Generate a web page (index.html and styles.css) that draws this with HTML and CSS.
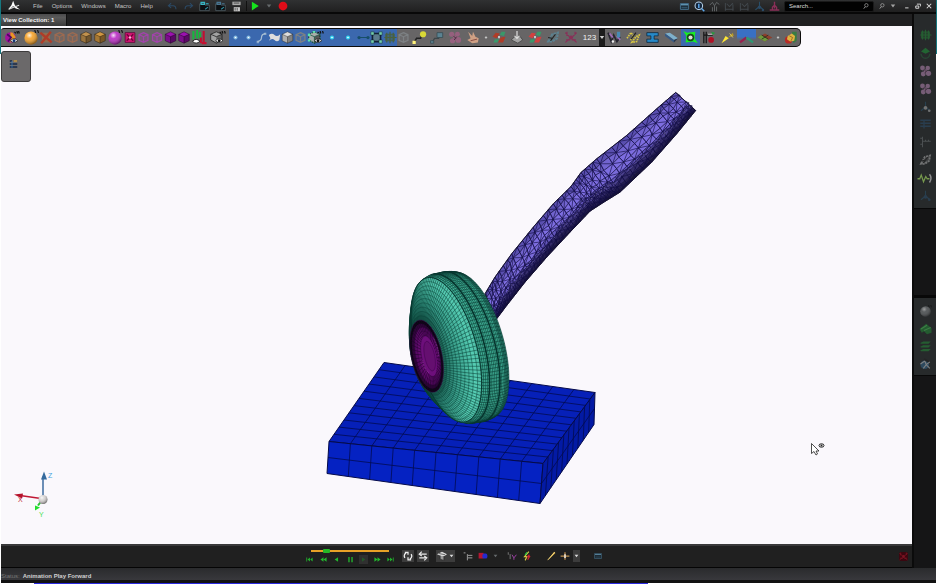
FILE: index.html
```html
<!DOCTYPE html>
<html lang="en">
<head>
<meta charset="utf-8">
<title>View Collection</title>
<link rel="stylesheet" href="styles.css">
</head>
<body>
<svg class="defs" aria-hidden="true">
  <defs>
    <radialGradient id="shine" cx=".38" cy=".3" r=".75"><stop offset="0" stop-color="#fff" stop-opacity=".85"/><stop offset=".35" stop-color="#fff" stop-opacity=".15"/><stop offset="1" stop-color="#000" stop-opacity=".55"/></radialGradient>
  </defs>
  <symbol id="cube" viewBox="0 0 16 16"><path d="M8 1l6.500 3v8L8 15l-6.500-3V4z" fill="currentColor"/><path d="M1.500 4L8 7v8l-6.500-3z" fill="#000" opacity=".2"/><path d="M14.500 4L8 7v8l6.500-3z" fill="#000" opacity=".42"/><path d="M8 1l6.500 3v8L8 15l-6.500-3V4zM1.500 4L8 7l6.500-3M8 7v8" fill="none" stroke="#000" stroke-opacity=".45"/></symbol>
  <symbol id="wire" viewBox="0 0 16 16"><path d="M8 2l5.500 2.500v7L8 14l-5.500-2.500v-7zM2.500 4.500L8 7l5.500-2.500M8 7v7" fill="currentColor" fill-opacity=".25" stroke="currentColor" stroke-width="1.500"/></symbol>
  <symbol id="eyecube" viewBox="0 0 20 16"><path d="M8 1l7 3v7l-7 4-7-4V4z" fill="currentColor" stroke="#222"/><path d="M15 4L8 7v8l7-4z" fill="#000" opacity=".4"/><path d="M1 4l7 3 7-3" fill="none" stroke="#222"/><path d="M12 1l2 2M15 0l1 3M18 0l1 3" stroke="#111" stroke-width="1.500"/><path d="M7 12q4.500-5 9 0q-4.500 4-9 0" fill="#fff" stroke="#222"/><circle cx="11.500" cy="12" r="1.800" fill="#111"/></symbol>
  <symbol id="meshcube" viewBox="0 0 20 16"><path d="M8 1l7 3v7l-7 4-7-4V4z" fill="#a9adaa" stroke="#14533f" stroke-width="1.500" stroke-dasharray="2 1"/><path d="M15 4L8 7v8l7-4z" fill="#000" opacity=".5"/><path d="M1 4l7 3 7-3M8 7v7" fill="none" stroke="#1f5a48"/><path d="M0 3h3v3H0zM6 0h3v2H6zM0 10h3v3H0z" fill="#59e5b0"/><path d="M12 1l2 2M15 0l1 3M18 0l1 3" stroke="#111" stroke-width="1.500"/><path d="M8 12q4.500-5 9 0q-4.500 4-9 0" fill="#fff" stroke="#222"/><circle cx="12.500" cy="12" r="1.800" fill="#111"/></symbol>
  <symbol id="duo" viewBox="0 0 20 16"><circle cx="8" cy="8" r="6.500" fill="#a3119f"/><path d="M8 1.500v13l5-3 1.500-4L11 2z" fill="#e99722"/><path d="M4 4l5 4-4 5" stroke="#4c0764" stroke-width="2" fill="none"/><path d="M13 1l2 2M16 0l1 3M18 0l1 3" stroke="#111" stroke-width="1.500"/><path d="M8 12q4.500-5 9 0q-4.500 4-9 0" fill="#fff" stroke="#222"/><circle cx="12.500" cy="12" r="1.800" fill="#137"/></symbol>
  <symbol id="ball" viewBox="0 0 16 16"><circle cx="8" cy="8.500" r="7" fill="currentColor"/><circle cx="8" cy="8.500" r="7" fill="url(#shine)"/><path d="M12 0l1 3M15 0l1 3" stroke="#111" stroke-width="1.200"/></symbol>
  <symbol id="cross" viewBox="0 0 16 16"><path d="M3 2h10v12H3z" fill="#8f6d4e"/><path d="M1 2l14 12M14 1L2 15" stroke="currentColor" stroke-width="3"/></symbol>
  <symbol id="dot" viewBox="0 0 16 16"><circle cx="8" cy="8" r="2.500" fill="currentColor"/><circle cx="8" cy="8" r="1" fill="#fff"/></symbol>
  <symbol id="line" viewBox="0 0 16 16"><path d="M3 13q5-1 5-5t5-5" fill="none" stroke="currentColor" stroke-width="1.500"/><path d="M2 12h3v3H2zM11 2h3v3h-3z" fill="currentColor" opacity=".7"/></symbol>
  <symbol id="flag" viewBox="0 0 16 16"><path d="M1 5q4-3 7 0t7-1l-1 7q-3 3-6 0t-7 1l2-3z" fill="currentColor"/></symbol>
  <symbol id="link" viewBox="0 0 16 16"><path d="M2 8h12" stroke="currentColor" stroke-width="1.500"/><circle cx="2.500" cy="8" r="2" fill="currentColor"/><circle cx="13.500" cy="8" r="2" fill="currentColor"/></symbol>
  <symbol id="select" viewBox="0 0 16 16"><path d="M3 3h10v10H3z" fill="#5b7c8c" stroke="#123" stroke-width="2"/><path d="M1 1h4v4H1zM11 1h4v4h-4zM1 11h4v4H1zM11 11h4v4h-4z" fill="currentColor" stroke="#123" stroke-width=".6"/></symbol>
  <symbol id="redbox" viewBox="0 0 16 16"><path d="M2 2h12v12H2z" fill="#d31272" stroke="#5e0a3a"/><path d="M4 4l8 8M12 4l-8 8" stroke="#74063c" stroke-width="2"/><circle cx="8" cy="8" r="1.500" fill="#ffb3d6"/></symbol>
  <symbol id="pin" viewBox="0 0 18 16"><path d="M3 14l3-5h5l2-6" fill="none" stroke="#222" stroke-width="1.800"/><path d="M1 12h4v4H1z" fill="#fff27a"/><circle cx="14" cy="4" r="3.800" fill="currentColor"/></symbol>
  <symbol id="tag" viewBox="0 0 18 16"><path d="M3 14l3-5h5l2-4" fill="none" stroke="#3c4649" stroke-width="1.500"/><path d="M1 12h4v3H1zM9 2h7v6H9z" fill="currentColor" stroke="#384c54"/></symbol>
  <symbol id="blob" viewBox="0 0 16 16"><circle cx="4" cy="4" r="3.200" fill="currentColor"/><circle cx="11" cy="4" r="3" fill="currentColor"/><circle cx="12" cy="11" r="3.500" fill="currentColor"/><circle cx="5" cy="12" r="3.200" fill="currentColor"/><circle cx="8" cy="8" r="2.500" fill="currentColor"/><path d="M6 6l3 3M10 7l-3 4" stroke="#3b2436"/></symbol>
  <symbol id="hand" viewBox="0 0 16 16"><path d="M2 1l5 5 1-5 3 6 4 2-1 5-7 1-6-4 4-2z" fill="currentColor"/><path d="M5 12l8-2" stroke="#7a3a35"/></symbol>
  <symbol id="chips" viewBox="0 0 16 16"><path d="M0 7l4-5 5 1-4 6zM7 14l3-6 6-1-3 7z" fill="currentColor"/><path d="M9 5l2-4h5l-2 5zM1 14l2-4h5l-2 4z" fill="#39996a"/><path d="M7 6h2v3H7" fill="#ddd"/></symbol>
  <symbol id="stamp" viewBox="0 0 16 16"><path d="M1 11l4-4h7l3 4-6 4z" fill="currentColor" stroke="#444"/><path d="M8 0v8M5 6l3 3 3-3" stroke="#ddd" stroke-width="1.500" fill="none"/></symbol>
  <symbol id="gears" viewBox="0 0 16 16"><path d="M2 13l5-9 7-2-1 7-6 4z" fill="currentColor" fill-opacity=".3" stroke="currentColor" stroke-width="2.500" stroke-dasharray="3 1"/><path d="M5 12l6-8M2 8l5 1" stroke="#222" stroke-width="1.500"/></symbol>
  <symbol id="burst" viewBox="0 0 16 16"><path d="M1 2l5 5M15 2l-5 5M1 14l5-4M15 14l-5-4M3 1v5M13 1v4M2 11h5M9 11h5" stroke="currentColor" stroke-width="1.500" fill="none"/><circle cx="8" cy="8" r="2.500" fill="currentColor"/></symbol>
  <symbol id="bars" viewBox="0 0 16 16"><path d="M2 1v9M6 0v9M9 2v7" stroke="#17b53e" stroke-width="2.200"/><path d="M13 1v13M10 8v6M11 14h5" stroke="#c40f30" stroke-width="2.200"/><path d="M1 12q4-4 8 0q-4 4-8 0" fill="#fff" stroke="#222"/></symbol>
  <symbol id="paint" viewBox="0 0 18 16"><path d="M1 2l4 11 3-8 4 8 4-6" stroke="#25252f" stroke-width="2" fill="none"/><path d="M3 3l4 5M12 6l4 5" stroke="#a06bbb" stroke-width="2"/><path d="M12 1h4v7h-4z" fill="#478bb4"/><circle cx="7" cy="13" r="1.500" fill="#eee"/></symbol>
  <symbol id="steps" viewBox="0 0 18 16"><path d="M1 9l5-7 3 4-4 6M7 14l5-7 4-2-3 8z" stroke="currentColor" stroke-width="2" stroke-dasharray="2 1" fill="none"/><path d="M6 10l6-8" stroke="#222" stroke-width="1.500"/></symbol>
  <symbol id="beam" viewBox="0 0 18 16"><path d="M2 2h14v4h-5v4h5v4H2v-4h5V6H2z" fill="#2689c8" stroke="#102b40"/></symbol>
  <symbol id="layer" viewBox="0 0 18 16"><path d="M1 3l6-1 10 7-5 2z" fill="#7eb0cc"/><path d="M1 3l11 8v3L1 6z" fill="#355a86"/><path d="M17 9l-5 5v-3z" fill="#28384d"/></symbol>
  <symbol id="target" viewBox="0 0 18 16"><path d="M0 0l5 2 10-1-1 8 4 6-6-2-9 1 1-8z" fill="#18ed22"/><circle cx="9" cy="8" r="4.500" fill="#154d19"/><circle cx="9" cy="8" r="2.500" fill="#ddd"/></symbol>
  <symbol id="gauge" viewBox="0 0 18 16"><path d="M2 1v14M5 1v14M2 5h11" stroke="#161616" stroke-width="1.500"/><path d="M7 4h6" stroke="#eee"/><circle cx="11" cy="11" r="3.500" fill="#b01025"/><path d="M11 1l5 1-3 3z" fill="#269b3e"/></symbol>
  <symbol id="wand" viewBox="0 0 18 16"><path d="M1 15l5-9 4 3z" fill="#ffe735"/><path d="M9 8l6-6 1 4z" fill="#b79a28"/><path d="M11 3l4 5" stroke="#ddd277"/></symbol>
  <symbol id="axes" viewBox="0 0 18 16"><path d="M9 8L1 14" stroke="#99204e" stroke-width="2.800"/><path d="M9 8l8 6" stroke="#2c9a72" stroke-width="2.800"/></symbol>
  <symbol id="plate" viewBox="0 0 18 16"><path d="M0 8l9-5 9 5-9 5z" fill="#8e3f2c"/><path d="M0 8l4-3 9 5-4 3z" fill="#6c9a3d"/><path d="M5 5l8 5M13 5L5 10" stroke="#2b3020"/></symbol>
  <symbol id="fruit" viewBox="0 0 18 16"><path d="M10 1h6v11l-4 3z" fill="#387c42"/><circle cx="6" cy="11" r="4.500" fill="#b72b25"/><path d="M5 6l5-3 4 3-1 6-5 1-4-3z" fill="#dfb340"/><path d="M7 6l4 2-2 4" stroke="#8a5e21" fill="none"/></symbol>
  <symbol id="table" viewBox="0 0 16 16"><path d="M1 3h14M1 7h14M1 11h14M6 2v12" stroke="currentColor" stroke-width="1.800"/></symbol>
  <symbol id="win" viewBox="0 0 16 12"><path d="M1 1h14v10H1z" fill="#1d2f3c" stroke="currentColor" stroke-width="1.500"/><path d="M2 3h12" stroke="#6aa5c6" stroke-width="2"/><path d="M3 8h10" stroke="currentColor"/></symbol>
  <symbol id="tree" viewBox="0 0 16 16"><path d="M3 4h3M8 4h5M3 8h10M3 12h10" stroke="#182a48" stroke-width="2"/><path d="M8 4h5" stroke="#d8a646" stroke-width="2"/><path d="M6 4v9" stroke="#377dc0"/></symbol>
  <symbol id="folder" viewBox="0 0 16 16"><path d="M1 14V4h6l2 2h6v8z" fill="#0c0f12" stroke="#5b6970"/><path d="M3 2h5v3H3zM10 4h4" stroke="currentColor" stroke-width="1.800" fill="none"/><path d="M9 12l4-3" stroke="#3196a8" stroke-width="1.500"/></symbol>
  <symbol id="disk" viewBox="0 0 16 16"><path d="M2 1h12v5H2z" fill="#aaa"/><path d="M4 9h9v6H4z" fill="#ccc"/><path d="M6 10v4M9 10v4M4 3h8" stroke="#222"/></symbol>
  <symbol id="undo" viewBox="0 0 16 16"><path d="M6 3L2 7l4 3M2 7h7q4 0 4 5" fill="none" stroke="currentColor" stroke-width="1.500"/></symbol>
  <symbol id="play" viewBox="0 0 16 16"><path d="M3 1l11 7-11 7z" fill="currentColor"/></symbol>
  <symbol id="record" viewBox="0 0 16 16"><circle cx="8" cy="8" r="7" fill="currentColor"/></symbol>
  <symbol id="caret" viewBox="0 0 8 8"><path d="M1 2h6L4 6z" fill="currentColor"/></symbol>
  <symbol id="zoomer" viewBox="0 0 16 16"><circle cx="7" cy="7" r="5.500" fill="#12243a" stroke="#b9d4ec" stroke-width="1.500"/><path d="M7 4v6M11 11l4 4" stroke="#5ca6e8" stroke-width="2.200"/></symbol>
  <symbol id="chart" viewBox="0 0 16 16"><path d="M1 6l4-4 3 5 3-5 4 3M5 9v6M8 7v8M11 8v7" fill="none" stroke="currentColor" stroke-width="1.300"/></symbol>
  <symbol id="frame" viewBox="0 0 16 16"><path d="M2 14V3M2 12h12M4 4l4 4 5-5M13 5v9" fill="none" stroke="currentColor" stroke-width="1.500"/></symbol>
  <symbol id="ruler" viewBox="0 0 16 16"><path d="M4 1v14M4 7h11M1 3h3M1 11h3M8 5v2M12 5v2" fill="none" stroke="currentColor" stroke-width="1.300"/></symbol>
  <symbol id="nodes" viewBox="0 0 16 16"><path d="M8 1v7l-6 5M8 8l6 5" stroke="#2a4f68" fill="none" stroke-width="1.500"/><circle cx="8" cy="9" r="2.500" fill="currentColor"/><circle cx="13" cy="13" r="1.800" fill="currentColor"/></symbol>
  <symbol id="find" viewBox="0 0 16 16"><circle cx="9" cy="6" r="4.500" fill="none" stroke="currentColor" stroke-width="2"/><path d="M6 10l-4 5" stroke="currentColor" stroke-width="2.500"/></symbol>
  <symbol id="tilt" viewBox="0 0 16 16"><path d="M1 13h14M8 1v10M5 9l3-3 3 3v4H5z" stroke="currentColor" stroke-width="2" fill="none"/></symbol>
  <symbol id="mini" viewBox="0 0 16 16"><path d="M3 13h9" stroke="currentColor" stroke-width="2.500"/></symbol>
  <symbol id="restore" viewBox="0 0 16 16"><path d="M5 3h10v6M2 8h8v6H2z" fill="none" stroke="currentColor" stroke-width="2.500"/></symbol>
  <symbol id="close" viewBox="0 0 16 16"><path d="M2 2l12 12M14 2L2 14" stroke="currentColor" stroke-width="2.800"/></symbol>
  <symbol id="bug" viewBox="0 0 16 16"><path d="M3 4h10v8H3zM1 8h15M8 1v14M4 2v12M12 2v12" fill="currentColor" stroke="currentColor" stroke-width="1.500" fill-opacity=".45"/></symbol>
  <symbol id="hat" viewBox="0 0 16 16"><path d="M2 6l6-5 6 5-6 3z" fill="#208b38"/><path d="M2 9q1 6 6 6t6-6" fill="none" stroke="#28583a" stroke-width="2"/></symbol>
  <symbol id="pulse" viewBox="0 0 20 16"><path d="M0 9h3l2-5 3 9 3-7 2 3h3" fill="none" stroke="#7fa451" stroke-width="1.700"/><path d="M16 3q4 5 0 11" fill="none" stroke="#999" stroke-width="2"/></symbol>
  <symbol id="slab" viewBox="0 0 16 16"><path d="M0 8L9 1l7 6v6l-6 2-4-4-3 2z" fill="#237c34"/><path d="M2 8l8-5M6 10l9-4" stroke="#49b755" stroke-width="1.500"/></symbol>
  <symbol id="stack" viewBox="0 0 16 16"><path d="M1 4l4-2h10l-3 3H2zM1 9l4-2h10l-3 3H2zM1 14l4-2h10l-3 3H2z" fill="currentColor"/></symbol>
  <symbol id="globe" viewBox="0 0 18 16"><circle cx="8" cy="9" r="6" fill="#315f80"/><path d="M2 8l6-4 2 5 5-4M6 14l4-5 5 5" stroke="#bbb" fill="none" stroke-width="1.500"/><path d="M7 1l6 4" stroke="#222" stroke-width="2.500"/></symbol>
  <symbol id="rew" viewBox="0 0 16 16"><path d="M8 3v10L1 8zM15 3v10L8 8z" fill="currentColor"/></symbol>
  <symbol id="start" viewBox="0 0 18 16"><path d="M1 3h2v10H1zM10 3v10L4 8zM17 3v10l-6-5z" fill="currentColor"/></symbol>
  <symbol id="pause" viewBox="0 0 16 16"><path d="M3 2h3v12H3zM10 2h3v12h-3z" fill="currentColor"/></symbol>
  <symbol id="loop" viewBox="0 0 16 16"><path d="M3 11a6 6 0 0 1 2-8M13 5a6 6 0 0 1-2 8M3 2h5v4M13 14H8v-4" fill="none" stroke="#eee" stroke-width="2"/></symbol>
  <symbol id="swap" viewBox="0 0 16 16"><path d="M14 5H4M2 11h10M6 1L2 5l4 3M10 8l4 3-4 4" fill="none" stroke="#e8e8e8" stroke-width="2"/></symbol>
  <symbol id="cap" viewBox="0 0 16 16"><path d="M0 5l8-4 8 4-6 4z" fill="#ddd"/><path d="M5 8v5l6 2V8M3 4l10 2" fill="#999" stroke="#222"/></symbol>
  <symbol id="lines" viewBox="0 0 16 16"><path d="M1 3h3M8 7h7M8 11h7M7 5v10" stroke="currentColor" stroke-width="1.500"/></symbol>
  <symbol id="vee" viewBox="0 0 16 16"><path d="M2 2v4M5 5v8" stroke="#7d7d7d" stroke-width="1.500"/><path d="M8 6l3 5 4-5M11 11v3" stroke="currentColor" stroke-width="1.500" fill="none"/></symbol>
  <symbol id="color" viewBox="0 0 16 16"><rect x="1" y="3" width="8" height="9" fill="#b51631"/><rect x="7" y="4" width="8" height="8" rx="3" fill="#252bd0"/></symbol>
  <symbol id="bolt" viewBox="0 0 16 16"><path d="M11 1L4 9h4l-3 6" stroke="#d8ca44" stroke-width="1.800" fill="none"/><path d="M12 6l-3 3h3l-3 5" stroke="#cf2533" stroke-width="2" fill="none"/><path d="M8 2L5 6" stroke="#26c846" stroke-width="2"/></symbol>
  <symbol id="pen" viewBox="0 0 16 16"><path d="M2 15L13 1l2 2L4 14z" fill="#e7b545"/><path d="M3 14L14 2" stroke="#fff4a4"/></symbol>
  <symbol id="plus" viewBox="0 0 16 16"><path d="M8 2v12M1 8h14" stroke="currentColor" stroke-width="2"/><path d="M8 5v6" stroke="#fff" stroke-width="2"/></symbol>
</svg>

<div class="app">
  <header class="menubar">
    <svg class="logo" viewBox="0 0 16 14" role="img" aria-label="Application logo"><path d="M7 1l2 5 3 3 3 2-5-1-3-3-3 3-3 1 4-5z" fill="#fff"/><path d="M2 11q5-3 12-5" fill="none" stroke="#ddd" stroke-width="1.200"/></svg>
    <nav class="menus" aria-label="Main menu"><a href="#">File</a><a href="#">Options</a><a href="#">Windows</a><a href="#">Macro</a><a href="#">Help</a></nav>
    <div class="quick">
      <button class="c-navy" aria-label="Undo"><svg><use href="#undo"/></svg></button>
      <button class="c-navy flip" aria-label="Redo"><svg><use href="#undo"/></svg></button>
      <button class="c-cyan" aria-label="Open"><svg><use href="#folder"/></svg></button>
      <button class="c-steel" aria-label="Import"><svg><use href="#folder"/></svg></button>
      <button aria-label="Save"><svg><use href="#disk"/></svg></button>
    </div>
    <div class="macro">
      <button class="c-green" aria-label="Run macro"><svg><use href="#play"/></svg></button>
      <button class="tiny c-dim" aria-label="Macro list"><svg><use href="#caret"/></svg></button>
      <button class="c-red" aria-label="Record macro"><svg><use href="#record"/></svg></button>
    </div>
    <div class="tools">
      <button class="c-steel short" aria-label="Window"><svg><use href="#win"/></svg></button>
      <button aria-label="Zoom"><svg><use href="#zoomer"/></svg></button>
      <button class="c-dim" aria-label="Chart"><svg><use href="#chart"/></svg></button>
      <button class="c-faint" aria-label="Plot"><svg><use href="#frame"/></svg></button>
      <button class="c-faint" aria-label="Frame"><svg><use href="#frame"/></svg></button>
      <button class="c-navy" aria-label="Nodes"><svg><use href="#nodes"/></svg></button>
      <button class="c-wine" aria-label="Align"><svg><use href="#tilt"/></svg></button>
    </div>
    <label class="search"><input type="text" placeholder="Search..." aria-label="Search"><svg><use href="#find"/></svg></label>
    <div class="window">
      <button class="c-grey" aria-label="Find"><svg><use href="#find"/></svg></button>
      <button class="c-grey" aria-label="Find options"><svg><use href="#caret"/></svg></button>
      <button class="c-light apart" aria-label="Minimise"><svg><use href="#mini"/></svg></button>
      <button class="c-light" aria-label="Restore"><svg><use href="#restore"/></svg></button>
      <button class="c-light" aria-label="Close"><svg><use href="#close"/></svg></button>
    </div>
  </header>

  <div class="work">
    <div class="centre">
      <div class="tabs"><button class="tab">View Collection: 1</button></div>
      <main class="view">
        <svg class="scene" id="scene" viewBox="1 26 911 517" role="img" aria-label="Wheel, arm and ground mesh"></svg>
        <div class="toolbar" role="toolbar" aria-label="Focus and visibility">
          <button class="w22" aria-label="Visibility"><svg><use href="#duo"/></svg></button>
          <button class="w16 c-amber" aria-label="Parts"><svg><use href="#ball"/></svg></button>
          <button class="c-rust" aria-label="Hide"><svg><use href="#cross"/></svg></button>
          <button class="w13 c-brown" aria-label="Wireframe"><svg><use href="#wire"/></svg></button>
          <button class="w13 c-brown" aria-label="Edges"><svg><use href="#wire"/></svg></button>
          <button class="c-tan" aria-label="Shaded"><svg><use href="#cube"/></svg></button>
          <button class="c-ochre" aria-label="Shaded edges"><svg><use href="#cube"/></svg></button>
          <button class="w16 c-magenta" aria-label="Properties"><svg><use href="#ball"/></svg></button>
          <button aria-label="Select property"><svg><use href="#redbox"/></svg></button>
          <button class="w13 c-violet" aria-label="Property wire"><svg><use href="#wire"/></svg></button>
          <button class="c-violet" aria-label="Property edges"><svg><use href="#wire"/></svg></button>
          <button class="w13 c-purple" aria-label="Property solid"><svg><use href="#cube"/></svg></button>
          <button class="c-purple" aria-label="Property shaded"><svg><use href="#cube"/></svg></button>
          <button class="w16" aria-label="Connections"><svg><use href="#bars"/></svg></button>
          <button class="w22 c-grey" aria-label="Geometry"><svg><use href="#eyecube"/></svg></button>
          <button class="w13 on c-sky" aria-label="Point"><svg><use href="#dot"/></svg></button>
          <button class="w13 on c-sky" aria-label="Vertex"><svg><use href="#dot"/></svg></button>
          <button class="w13 on c-pale" aria-label="Curve"><svg><use href="#line"/></svg></button>
          <button class="w13 on c-light" aria-label="Surface"><svg><use href="#flag"/></svg></button>
          <button class="w13 on c-light" aria-label="Solid"><svg><use href="#cube"/></svg></button>
          <button class="w13 on c-dim" aria-label="Volume"><svg><use href="#wire"/></svg></button>
          <button class="w18 on" aria-label="Elements"><svg><use href="#meshcube"/></svg></button>
          <button class="on c-aqua" aria-label="Node"><svg><use href="#dot"/></svg></button>
          <button class="w18 on c-aqua" aria-label="Mass"><svg><use href="#dot"/></svg></button>
          <button class="w13 on c-teal" aria-label="Bar"><svg><use href="#link"/></svg></button>
          <button class="w13 on c-mint" aria-label="Shell"><svg><use href="#select"/></svg></button>
          <button class="on c-olive" aria-label="Solid element"><svg><use href="#bug"/></svg></button>
          <button class="w13 c-dim" aria-label="Other"><svg><use href="#wire"/></svg></button>
          <button class="w18 c-yellow" aria-label="Identify"><svg><use href="#pin"/></svg></button>
          <button class="w18 c-slate" aria-label="Identify part"><svg><use href="#tag"/></svg></button>
          <button class="w18 c-plum" aria-label="Groups"><svg><use href="#blob"/></svg></button>
          <button class="w18 c-skin" aria-label="Pick"><svg><use href="#hand"/></svg></button>
          <button class="w8 c-grey" aria-label="More"><svg><use href="#dot"/></svg></button>
          <button class="w18 c-rust" aria-label="Contacts"><svg><use href="#chips"/></svg></button>
          <button class="w18 c-grey" aria-label="Project"><svg><use href="#stamp"/></svg></button>
          <button class="w18 c-red2" aria-label="Pairs"><svg><use href="#chips"/></svg></button>
          <button class="w18 c-slate" aria-label="Mechanism"><svg><use href="#gears"/></svg></button>
          <button class="w18 c-wine" aria-label="Explode"><svg><use href="#burst"/></svg></button>
          <button class="w19 num">123</button>
          <button class="drop" aria-label="Number options"><svg><use href="#caret"/></svg></button>
          <button class="w19" aria-label="Paint"><svg><use href="#paint"/></svg></button>
          <button class="w19 c-gold" aria-label="Normals"><svg><use href="#steps"/></svg></button>
          <button class="w19" aria-label="Section"><svg><use href="#beam"/></svg></button>
          <button class="w19" aria-label="Layers"><svg><use href="#layer"/></svg></button>
          <button class="w19 on" aria-label="Focus"><svg><use href="#target"/></svg></button>
          <button class="w19" aria-label="Measure"><svg><use href="#gauge"/></svg></button>
          <button class="w18" aria-label="Highlight"><svg><use href="#wand"/></svg></button>
          <button class="w19 half" aria-label="Axes"><svg><use href="#axes"/></svg></button>
          <button class="w18" aria-label="Plane"><svg><use href="#plate"/></svg></button>
          <button class="w8 c-grey" aria-label="More planes"><svg><use href="#dot"/></svg></button>
          <button class="w18" aria-label="Materials"><svg><use href="#fruit"/></svg></button>
        </div>
        <button class="float" aria-label="Model tree"><svg><use href="#tree"/></svg></button>
      </main>
      <section class="animation" aria-label="Animation">
        <div class="transport">
          <input type="range" min="0" max="100" value="17" aria-label="Animation frame">
          <div class="keys">
            <button aria-label="First"><svg><use href="#start"/></svg></button>
            <button aria-label="Fast back"><svg><use href="#rew"/></svg></button>
            <button class="flip small" aria-label="Play back"><svg><use href="#play"/></svg></button>
            <button aria-label="Pause"><svg><use href="#pause"/></svg></button>
            <button class="small pressed" aria-label="Play"><svg><use href="#play"/></svg></button>
            <button class="flip" aria-label="Fast forward"><svg><use href="#rew"/></svg></button>
            <button class="flip" aria-label="Last"><svg><use href="#start"/></svg></button>
          </div>
        </div>
        <div class="set"><button class="lit" aria-label="Loop"><svg><use href="#loop"/></svg></button><button class="lit" aria-label="Swing"><svg><use href="#swap"/></svg></button></div>
        <div class="set joined"><button class="lit" aria-label="Record settings"><svg><use href="#cap"/></svg></button><button class="lit thin c-light" aria-label="Record options"><svg><use href="#caret"/></svg></button></div>
        <div class="set"><button class="c-grey" aria-label="Deformation"><svg><use href="#lines"/></svg></button><button aria-label="Contour"><svg><use href="#color"/></svg></button><button class="thin c-dim" aria-label="Contour options"><svg><use href="#caret"/></svg></button></div>
        <div class="set"><button class="c-violet" aria-label="Vectors"><svg><use href="#vee"/></svg></button><button aria-label="Results"><svg><use href="#bolt"/></svg></button></div>
        <div class="set late"><button aria-label="Annotate"><svg><use href="#pen"/></svg></button><button class="c-tan" aria-label="Add"><svg><use href="#plus"/></svg></button><button class="lit thin c-light" aria-label="Add options"><svg><use href="#caret"/></svg></button></div>
        <div class="set late"><button class="c-steel dull" aria-label="Table"><svg><use href="#win"/></svg></button></div>
        <button class="stop" aria-label="Stop"><svg><use href="#burst"/></svg></button>
      </section>
    </div>
    <aside class="side">
      <div class="panel">
        <button class="c-forest" aria-label="Mesh"><svg><use href="#bug"/></svg></button>
        <button aria-label="Cover"><svg><use href="#hat"/></svg></button>
        <button class="c-mauve" aria-label="Assemble"><svg><use href="#blob"/></svg></button>
        <button class="c-mauve" aria-label="Group"><svg><use href="#blob"/></svg></button>
        <button class="c-grey" aria-label="Network"><svg><use href="#nodes"/></svg></button>
        <button class="c-navy" aria-label="List"><svg><use href="#table"/></svg></button>
        <button class="c-dim" aria-label="Ruler"><svg><use href="#ruler"/></svg></button>
        <button class="c-grey" aria-label="Tools"><svg><use href="#gears"/></svg></button>
        <button class="full" aria-label="Signal"><svg><use href="#pulse"/></svg></button>
        <button class="c-navy" aria-label="Curve"><svg><use href="#nodes"/></svg></button>
      </div>
      <div class="panel second">
        <button class="c-dim" aria-label="Sphere"><svg><use href="#ball"/></svg></button>
        <button aria-label="Slab"><svg><use href="#slab"/></svg></button>
        <button class="c-forest" aria-label="Stack"><svg><use href="#stack"/></svg></button>
        <button aria-label="World"><svg><use href="#globe"/></svg></button>
      </div>
    </aside>
  </div>
  <footer class="status"><span>Status:</span><strong>Animation Play Forward</strong></footer>
  <div class="edge"></div>
</div>
<script src="scene.js"></script>
</body>
</html>
```

FILE: styles.css
```css
* { box-sizing: border-box; }
body { margin: 0; background: #fff; font: 6px/8px "Liberation Sans", Arial, sans-serif; color: #bbb; }
button { display: flex; align-items: center; justify-content: center; flex: none; margin: 0; padding: 0; border: 0; background: none; color: inherit; font: inherit; }
button svg { display: block; width: 100%; height: 100%; }
a { color: inherit; text-decoration: none; }
.defs { position: absolute; width: 0; height: 0; }
.flip svg { transform: scaleX(-1); }

.app { display: grid; grid-template-rows: 14px 1fr 15px 1px; height: 100vh; padding: 0 1px; background: linear-gradient(#16777f 54px, #fff 54px); }

.menubar { display: flex; align-items: center; padding: 0 4px 2px 0; background: linear-gradient(#303132, #202020 85%, #080808 86%); min-width: 0; }
.menubar button { width: 11px; height: 11px; }
.logo { width: 14px; height: 12px; margin: 0 12px 0 6px; }
.menus { display: flex; gap: 9px; color: #c4c4c4; }
.quick { display: flex; gap: 5px; margin-left: 14px; }
.macro { display: flex; align-items: center; gap: 4px; margin-left: 4px; padding-left: 3px; border-left: 1px solid #111; }
.macro button { width: 10px; height: 10px; }
.menubar .tiny { width: 6px; height: 6px; margin: 0 2px; }
.tools { display: flex; align-items: center; gap: 4px; margin-left: auto; margin-right: 4px; }
.tools .short { height: 7px; }
.search { display: flex; align-items: center; width: 90px; height: 11px; padding: 0 4px; border: 1px solid #1a1a1a; border-radius: 2px; background: #020202; color: #999; }
.search input { flex: 1; min-width: 0; height: 8px; padding: 0; border: 0; outline: 0; background: none; color: #ddd; font: 6px/8px "Liberation Sans", Arial, sans-serif; }
.search input::placeholder { color: #ddd; opacity: 1; }
.search svg { width: 6px; height: 6px; }
.window { display: flex; align-items: center; gap: 5px; padding-left: 5px; }
.window button { width: 6px; height: 6px; }
.window .apart { margin-left: 3px; }

.work { display: flex; min-height: 0; }
.centre { flex: 1; display: flex; flex-direction: column; min-width: 0; }
.tabs { flex: none; height: 12px; background: #202021; }
.tab { height: 12px; padding: 0 12px 0 2px; border-right: 1px solid #111; background: linear-gradient(#4b4b4c, #5a5a5a 30%, #3a3a3a); color: #f2f2f2; font-weight: bold; }
.view { flex: 1; position: relative; min-height: 0; padding-top: 2px; background: #faf8fc; }
.scene { position: absolute; left: 0; top: 0; width: 100%; height: 100%; }
.toolbar { position: relative; display: flex; align-items: stretch; width: max-content; height: 19px; border: 1px solid #0b0b0b; border-left: 0; border-radius: 3px 5px 5px 0; background: #676566; overflow: hidden; }
.toolbar button { width: 14px; padding: 2px 0; }
.toolbar .w22 { width: 22px; }
.toolbar .w16 { width: 16px; padding: 1px 0; }
.toolbar .w13 { width: 13px; }
.toolbar .w18 { width: 18px; }
.toolbar .w19 { width: 19px; }
.toolbar .w8 { width: 8px; padding: 0; }
.toolbar .on { background: #3b68ae; }
.toolbar .half { background: linear-gradient(#3970c4 45%, #676566 65%); }
.toolbar .num { color: #f0f0f0; font-size: 8px; }
.toolbar .drop { width: 6px; background: #1c1c1c; color: #ccc; }
.float { position: relative; width: 30px; height: 31px; margin-top: 4px; padding: 0 6px 6px 0; border: 1px solid #3d3b3c; border-radius: 3px; background: #6b696a; }
.float svg { width: 13px; height: 12px; }

.animation { flex: none; display: flex; align-items: center; height: 24px; padding: 0 4px 1px 304px; border-top: 2px solid #39393a; border-bottom: 1px solid #050505; background: #202020; }
.transport { display: flex; flex-direction: column; gap: 2px; width: 90px; color: #22b92e; }
.transport input { -webkit-appearance: none; appearance: none; width: 78px; height: 4px; margin: 0 6px; background: linear-gradient(transparent 1px, #e8a127 1px, #e8a127 3px, transparent 3px); }
.transport input::-webkit-slider-thumb { -webkit-appearance: none; width: 7px; height: 4px; border-radius: 1px; background: #25b727; }
.keys { display: flex; justify-content: space-between; }
.keys button { width: 9px; height: 9px; padding: 1px; }
.keys .small { padding: 2px; }
.keys .pressed { background: #303030; color: #24592a; }
.set { display: flex; align-items: center; gap: 3px; margin-left: 7px; }
.set button { width: 12px; height: 12px; padding: 1px; }
.set .thin { width: 7px; padding: 1px; }
.set .lit { background: #3c3c3c; }
.set.joined { gap: 0; }
.set + .late { margin-left: 12px; gap: 2px; }
.set .dull { padding: 3px 1px; opacity: .7; }
.stop { width: 9px; height: 9px; margin-left: auto; border-radius: 2px; background: #3c0710; color: #7c1422; }

.side { flex: none; display: flex; flex-direction: column; width: 24px; border-left: 2px solid #0b0b0b; background: #151516; }
.panel { display: flex; flex-direction: column; align-items: center; justify-content: space-between; height: 195px; padding: 15px 0 6px; border-bottom: 1px solid #080808; background: #272a2b; }
.panel button { width: 13px; height: 12px; opacity: .6; }
.panel .full { width: 18px; opacity: .9; }
.second { height: 81px; margin-top: 86px; padding: 7px 0 5px; border-top: 3px solid #080808; }
.status { display: flex; align-items: center; gap: 3px; background: linear-gradient(#2a2b2d, #38383c 80%, #111 81%); color: #777; }
.status strong { color: #cfcfcf; }
.edge { background: linear-gradient(90deg, #fff 33px, #2b2be0 33px, #2b2be0 647px, #fff 647px); }

.c-navy { color: #2b4a66; } .c-cyan { color: #36b7c6; } .c-steel { color: #477592; }
.c-green { color: #15e51c; } .c-red { color: #e00c18; } .c-dim { color: #666b6d; }
.c-faint { color: #41474c; } .c-wine { color: #8a2f58; } .c-grey { color: #a2a2a2; }
.c-light { color: #ddd; } .c-amber { color: #f59a17; } .c-rust { color: #b03c28; }
.c-brown { color: #9d6a50; } .c-tan { color: #c1914e; } .c-ochre { color: #d09642; }
.c-magenta { color: #b51bc0; } .c-violet { color: #a243ab; }
.c-purple { color: #9b11af; } .c-sky { color: #83b9e0; } .c-pale { color: #aac0d4; }
.c-mint { color: #73cfac; } .c-aqua { color: #35d5f1; } .c-teal { color: #174f68; }
.c-olive { color: #49613f; } .c-yellow { color: #d9d936; } .c-slate { color: #5b8392; }
.c-plum { color: #96607e; } .c-skin { color: #cfa084; } .c-red2 { color: #d2403f; }
.c-gold { color: #d8c740; } .c-forest { color: #247f36; } .c-mauve { color: #ab7fa8; }
.toolbar .c-dim { color: #7d8184; }

.scene text { font: 7px "Liberation Sans", Arial, sans-serif; }
```

FILE: scene.js
```js
const NS = "http://www.w3.org/2000/svg";
const scene = document.getElementById("scene");

function add(parent, tag, attrs) {
  const el = document.createElementNS(NS, tag);
  for (const k in attrs) el.setAttribute(k, attrs[k]);
  parent.appendChild(el);
  return el;
}
const mix = (a, b, t) => [a[0] + (b[0] - a[0]) * t, a[1] + (b[1] - a[1]) * t];
const pt = p => p[0].toFixed(1) + " " + p[1].toFixed(1);
const poly = ps => "M" + ps.map(pt).join("L") + "Z";
const seg = (a, b) => "M" + pt(a) + "L" + pt(b);

function grid(face, fill, cols, rows) {
  const [a, b, c, d] = face;
  add(scene, "path", { d: poly(face), fill, stroke: "#040a4a", "stroke-width": 1 });
  let path = "";
  for (let i = 1; i < cols; i++) path += seg(mix(a, b, i / cols), mix(d, c, i / cols));
  for (let i = 1; i < rows; i++) path += seg(mix(a, d, i / rows), mix(b, c, i / rows));
  add(scene, "path", { d: path, fill: "none", stroke: "#020b50", "stroke-width": 0.8 });
}

// Ground block: top, front and right faces
grid([[384, 362], [595, 392], [543, 463], [329, 441]], "#0620b8", 10, 11);
grid([[329, 441], [543, 463], [540, 503], [327, 473]], "#0522c2", 10, 2);
grid([[543, 463], [595, 392], [594, 424], [540, 503]], "#031aa4", 10, 2);

// Arm: triangles between an upper and a lower profile
const upper = [[45, 640], [75, 590], [125, 520], [190, 440], [250, 370], [303, 318], [333, 276], [380, 235], [470, 165], [560, 85], [617, 36]];
const lower = [[80, 715], [110, 675], [165, 605], [230, 530], [300, 455], [360, 392], [400, 366], [450, 335], [545, 245], [620, 160], [677, 90]];
const arm = add(scene, "g", { transform: "translate(470 80) scale(.3333)" });
const along = (line, t) => {
  const s = t * (line.length - 1), i = Math.min(line.length - 2, Math.floor(s));
  return mix(line[i], line[i + 1], s - i);
};
let seed = 7;
const rnd = () => (seed = (seed * 16807) % 2147483647) / 2147483647 - 0.5;
const across = [0, 0.16, 0.33, 0.5, 0.62, 0.7, 0.78, 0.86, 0.93, 1];
const tint = ["#5a4fb0", "#7264cf", "#7d6de0", "#7a6bda", "#6255ba", "#4b418f", "#352d6b", "#241e4d", "#191538"];
const N = 40;
const pts = [];
for (let i = 0; i <= N; i++) {
  pts.push(across.map((v, j) => {
    const p = mix(along(upper, i / N), along(lower, i / N), v);
    return j && j < across.length - 1 ? [p[0] + rnd() * 6, p[1] + rnd() * 6] : p;
  }));
}
for (let j = 0; j < across.length - 1; j++) {
  let cells = "", lines = "";
  for (let i = 0; i < N; i++) {
    const a = pts[i][j], b = pts[i + 1][j], c = pts[i + 1][j + 1], d = pts[i][j + 1];
    cells += poly([a, b, c, d]);
    lines += (i + j) % 2 ? seg(a, c) : seg(b, d);
    if (j > 3) lines += seg(mix(a, b, 0.5), mix(d, c, 0.5));
  }
  add(arm, "path", { d: cells + lines, fill: tint[j], stroke: "#110c44", "stroke-width": 1.9 });
}
let glint = "";
for (let i = 2; i < N; i++) glint += seg(pts[i][5], mix(pts[i][5], pts[i][6], 0.5));
add(arm, "path", { d: glint, fill: "none", stroke: "#a8a0d0", "stroke-width": 1.5 });
add(arm, "path", { d: poly([...upper, ...lower.slice().reverse()]), fill: "none", stroke: "#15122f", "stroke-width": 3 });

// Wheel: stacked rings for the tread, then the sidewall and the hub
const wheel = add(scene, "g", { transform: "translate(310 250) scale(.3333)" });
function ring(cx, cy, rx, ry, deg) {
  const r = deg * Math.PI / 180, c = Math.cos(r), s = Math.sin(r);
  return a => {
    const x = rx * Math.cos(a), y = ry * Math.sin(a);
    return [cx + x * c - y * s, cy + x * s + y * c];
  };
}
const outline = (f, n = 90) => poly(Array.from({ length: n }, (_, i) => f(i * 2 * Math.PI / n)));
const tread = t => {
  const k = 1 - 0.035 * Math.pow(Math.abs(2 * t - 1), 3);
  return ring(409 + 82 * t, 298 - 15 * t, 94 * k, 232 * k, -15.5);
};
for (let i = 16; i >= 0; i--) {
  const groove = i === 4 || i === 10;
  add(wheel, "path", { d: outline(tread(i / 16)), fill: i > 13 ? "#2b806f" : "#40b096", stroke: "#07352e", "stroke-width": groove ? 5 : 1.7 });
}
let cross = "";
const M = 130;
for (let i = 0; i < M; i++) {
  const a = i * 2 * Math.PI / M;
  const p = tread(0)(a), q = tread(0)(a + 0.01);
  if ((q[1] - p[1]) * 82 + (q[0] - p[0]) * 15 < 0) continue;
  for (let k = 0; k < 16; k++) cross += seg(tread(k / 16)(a), tread((k + 1) / 16)(a));
}
add(wheel, "path", { d: cross, fill: "none", stroke: "#07352e", "stroke-width": 1.7 });

const wall = t => {
  const bulge = Math.sin(t * Math.PI) * 4;
  return ring(409 - 59 * t - bulge, 298 + 19 * t, 92 - 46 * t, 224 - 114 * t, -15.5 + 4 * t);
};
const shades = ["#52c2aa", "#55cbb2", "#4ec1a9", "#49b8a1", "#43af99", "#3da590", "#379a87", "#318c7a", "#297b6b", "#1f6658"];
shades.forEach((fill, i) => add(wheel, "path", { d: outline(wall(i / 10)), fill, stroke: "#0d4a3f", "stroke-width": 1.6 }));
let rays = "";
for (let i = 0; i < 110; i++) {
  const a = i * 2 * Math.PI / 110;
  for (let k = 0; k < 10; k++) rays += seg(wall(k / 10)(a), wall((k + 1) / 10)(a));
}
add(wheel, "path", { d: rays, fill: "none", stroke: "#083c33", "stroke-width": 1.6 });
add(wheel, "path", { d: outline(tread(0)), fill: "none", stroke: "#07352e", "stroke-width": 3 });
[["#0c0614", 46, 110, 350], ["#2d0638", 39, 98, 350], ["#560a63", 35, 88, 353], ["#650c71", 29, 76, 355], ["#6d0f7b", 22, 62, 357], ["#650f70", 15, 45, 359]].forEach(([fill, rx, ry, cx]) =>
  add(wheel, "path", { d: outline(ring(cx, 317, rx, ry, -12)), fill, stroke: "#3a0546", "stroke-width": 1.5 }));
let spokes = "";
for (let i = 0; i < 44; i++) {
  const a = i * 2 * Math.PI / 44;
  spokes += seg(ring(350, 317, 46, 110, -12)(a), ring(357, 317, 22, 62, -12)(a));
}
add(wheel, "path", { d: spokes, stroke: "#1d0226", "stroke-width": 1.6 });
add(wheel, "path", { d: "M338 330q5 26 20 38M370 262q14 24 16 54", fill: "none", stroke: "#b75fc0", "stroke-width": 2, "stroke-dasharray": "2 3" });

// Axis triad
add(scene, "path", { d: "M43 498V476", stroke: "#3c6b9f", "stroke-width": 1.5 });
add(scene, "path", { d: "M44 471l-3 8h6z", fill: "#356a9d" });
add(scene, "path", { d: "M41 498l-21-3", stroke: "#c01834", "stroke-width": 1.5 });
add(scene, "path", { d: "M14 494l9-1-1 5z", fill: "#b5122b" });
add(scene, "path", { d: "M41 501l-3 4", stroke: "#24c62e", "stroke-width": 2 });
add(scene, "path", { d: "M35 510v-5l5 2z", fill: "#22df2d" });
add(scene, "circle", { cx: 43, cy: 499, r: 4.5, fill: "#d4d0cf" });
add(scene, "circle", { cx: 43, cy: 499, r: 4.5, fill: "url(#shine)" });
[["Z", 48, 477, "#43a4de"], ["X", 18, 501, "#c01834"], ["Y", 39, 516, "#4be052"]].forEach(([label, x, y, fill]) => {
  add(scene, "text", { x, y, fill }).textContent = label;
});

// Pointer with its eye badge
add(scene, "path", { d: "M811.500 443v10l2.500-2 2 3.500 1.500-1-1.500-3h3z", fill: "#fff", stroke: "#222", "stroke-width": 0.8 });
add(scene, "ellipse", { cx: 821.5, cy: 445, rx: 2.5, ry: 1.7, fill: "#fff", stroke: "#222" });
add(scene, "circle", { cx: 821.5, cy: 445, r: 1, fill: "#222" });
```
